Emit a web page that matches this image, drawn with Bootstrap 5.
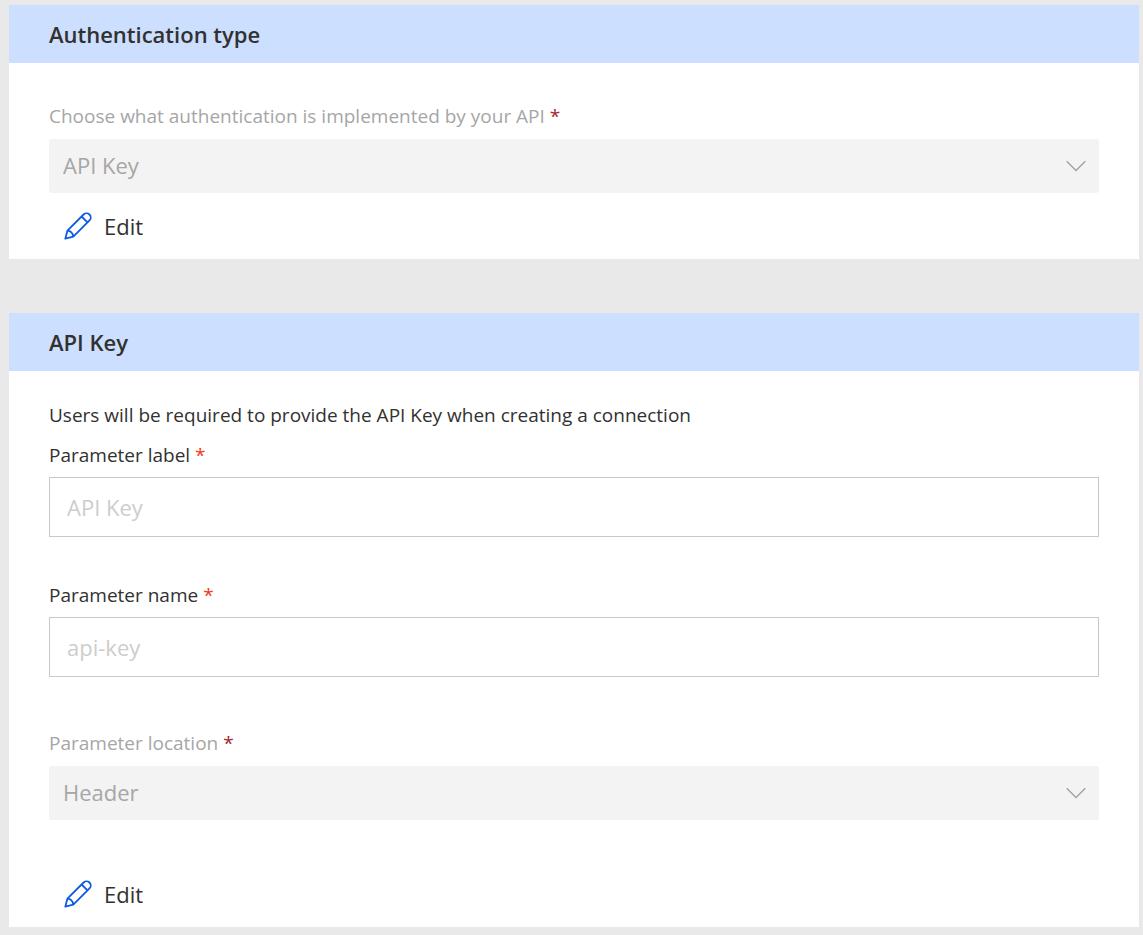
<!DOCTYPE html>
<html lang="en">
<head>
<meta charset="utf-8">
<meta name="viewport" content="width=device-width, initial-scale=1">
<title>Authentication type</title>
<link href="https://cdn.jsdelivr.net/npm/bootstrap@5.3.0/dist/css/bootstrap.min.css" rel="stylesheet">
<style>
  body { background: #e9e9e9; color: #323130; font-family: "Open Sans", "Noto Sans", sans-serif; font-size: 19px; line-height: 28px; }
  main { padding: 5px 4px 8px 9px; }
  .panel-gap { margin-bottom: 54px; }
  .panel-head { background: #ccdfff; padding: 15px 40px; }
  .panel-head h2 { font-size: 22px; line-height: 28px; font-weight: 600; margin: 0; }
  .panel-body { padding: 39px 40px 13px; }
  .panel-body-key { padding-top: 30px; }
  .intro { margin-bottom: 12px; }
  .field-label { display: block; margin: 0 0 8px; }
  .field-label.is-off { color: #a6a6a6; margin-bottom: 9px; }
  .star { color: #f03a17; }
  .is-off .star { color: #a4262c; }
  .pick, .pick:disabled {
    height: 54px; border: 0; border-radius: 3px; padding: 0 48px 2px 14px;
    font-size: 22px; line-height: 28px; color: #a6a6a6; opacity: 1; background-color: #f3f3f3;
    background-image: url("data:image/svg+xml,%3Csvg xmlns='http://www.w3.org/2000/svg' viewBox='0 0 20 12'%3E%3Cpath d='M.7 1.2 10 10.5 19.3 1.2' fill='none' stroke='%23a0a0a0' stroke-width='1.3'/%3E%3C/svg%3E");
    background-size: 20px 12px; background-position: right 13px center;
  }
  .entry { height: 60px; border: 1px solid #c8c8c8; border-radius: 0; padding: 0 17px; font-size: 22px; color: #323130; }
  .entry::placeholder { color: #cdcdcd; opacity: 1; }
  .group { margin-bottom: 44px; }
  .group-wide { margin-bottom: 52px; }
  .edit-btn { height: 40px; border: 0; padding: 0 15px; gap: 12px; margin-top: 13px; font-size: 22px; line-height: 28px; color: #323130; }
  .edit-btn-low { margin-top: 54px; }
</style>
</head>
<body>
<main>
  <section class="panel-gap bg-white">
    <div class="panel-head"><h2>Authentication type</h2></div>
    <div class="panel-body">
      <label class="field-label is-off" for="authType">Choose what authentication is implemented by your API <span class="star">*</span></label>
      <select class="form-select pick" id="authType" disabled><option>API Key</option></select>
      <button type="button" class="btn edit-btn d-flex align-items-center">
        <svg width="28" height="28" viewBox="0 0 28 28" fill="none" stroke="#0f5be0" stroke-width="1.8" stroke-linejoin="round" aria-hidden="true"><path d="M1.3 26.7 3.4 18.7 19.6 2.5A4.1 4.1 0 0 1 25.5 8.4L9.3 24.6Z M17.6 4.5 23.5 10.4 M3.4 18.7C6.5 19 8.8 21.5 9.3 24.6"/></svg>
        <span>Edit</span>
      </button>
    </div>
  </section>

  <section class="bg-white">
    <div class="panel-head"><h2>API Key</h2></div>
    <div class="panel-body panel-body-key">
      <p class="intro">Users will be required to provide the API Key when creating a connection</p>
      <div class="group">
        <label class="field-label" for="paramLabel">Parameter label <span class="star">*</span></label>
        <input type="text" class="form-control entry" id="paramLabel" placeholder="API Key">
      </div>
      <div class="group-wide">
        <label class="field-label" for="paramName">Parameter name <span class="star">*</span></label>
        <input type="text" class="form-control entry" id="paramName" placeholder="api-key">
      </div>
      <label class="field-label is-off" for="paramLocation">Parameter location <span class="star">*</span></label>
      <select class="form-select pick" id="paramLocation" disabled><option>Header</option></select>
      <button type="button" class="btn edit-btn edit-btn-low d-flex align-items-center">
        <svg width="28" height="28" viewBox="0 0 28 28" fill="none" stroke="#0f5be0" stroke-width="1.8" stroke-linejoin="round" aria-hidden="true"><path d="M1.3 26.7 3.4 18.7 19.6 2.5A4.1 4.1 0 0 1 25.5 8.4L9.3 24.6Z M17.6 4.5 23.5 10.4 M3.4 18.7C6.5 19 8.8 21.5 9.3 24.6"/></svg>
        <span>Edit</span>
      </button>
    </div>
  </section>
</main>
<script src="https://cdn.jsdelivr.net/npm/bootstrap@5.3.0/dist/js/bootstrap.bundle.min.js"></script>
</body>
</html>
